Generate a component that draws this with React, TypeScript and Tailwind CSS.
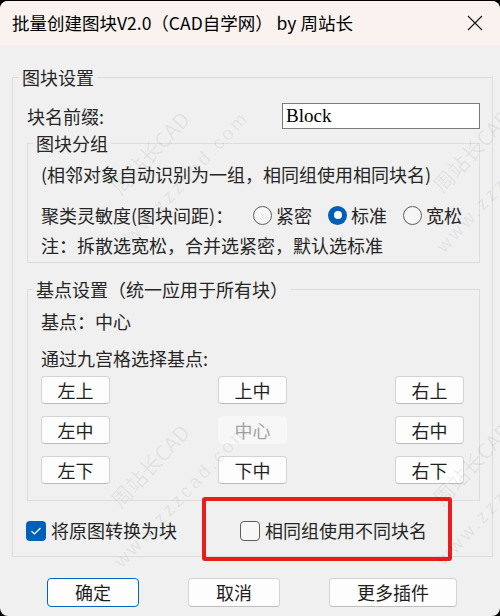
import React, { useState } from "react";

const gridButtons = [
  ["左上", "上中", "右上"],
  ["左中", "中心", "右中"],
  ["左下", "下中", "右下"],
];

const Radio: React.FC<{ checked: boolean; label: string; onClick: () => void }> = ({ checked, label, onClick }) => (
  <button onClick={onClick} className="flex items-center gap-[4px]">
    {checked ? (
      <span className="w-[19px] h-[19px] rounded-full bg-[#005fb8] flex items-center justify-center">
        <span className="w-[8px] h-[8px] rounded-full bg-white" />
      </span>
    ) : (
      <span className="w-[19px] h-[19px] rounded-full border border-[#5c5c5c] bg-[#f6f6f6]" />
    )}
    <span>{label}</span>
  </button>
);

const Checkbox: React.FC<{ checked: boolean; label: string; onClick: () => void }> = ({ checked, label, onClick }) => (
  <button onClick={onClick} className="flex items-center gap-[5px]">
    {checked ? (
      <span className="w-[20px] h-[20px] rounded-[4px] bg-[#005fb8] flex items-center justify-center">
        <svg width="12" height="10" viewBox="0 0 12 10">
          <path d="M1.5 5.2 L4.5 8 L10.5 2" fill="none" stroke="white" strokeWidth="1.2" />
        </svg>
      </span>
    ) : (
      <span className="w-[20px] h-[20px] rounded-[4px] border border-[#5e5e5e] bg-[#f7f7f7]" />
    )}
    <span>{label}</span>
  </button>
);

// faint diagonal watermark laid over the dialog
const Watermark: React.FC = () => (
  <div className="absolute inset-0 pointer-events-none text-black/[0.07]">
    <span className="absolute left-[150px] top-[152px] -translate-x-1/2 -translate-y-1/2 -rotate-[47deg] whitespace-nowrap text-[21px]">周站长CAD</span>
    <span className="absolute left-[182px] top-[182px] -translate-x-1/2 -translate-y-1/2 -rotate-[47deg] whitespace-nowrap text-[19px] tracking-[3px] font-['Liberation_Sans',sans-serif]">www.zzzcad.com</span>
    <span className="absolute left-[472px] top-[150px] -translate-x-1/2 -translate-y-1/2 -rotate-[47deg] whitespace-nowrap text-[21px]">周站长CAD</span>
    <span className="absolute left-[504px] top-[180px] -translate-x-1/2 -translate-y-1/2 -rotate-[47deg] whitespace-nowrap text-[19px] tracking-[3px] font-['Liberation_Sans',sans-serif]">www.zzzcad.com</span>
    <span className="absolute left-[150px] top-[465px] -translate-x-1/2 -translate-y-1/2 -rotate-[47deg] whitespace-nowrap text-[21px]">周站长CAD</span>
    <span className="absolute left-[182px] top-[495px] -translate-x-1/2 -translate-y-1/2 -rotate-[47deg] whitespace-nowrap text-[19px] tracking-[3px] font-['Liberation_Sans',sans-serif]">www.zzzcad.com</span>
    <span className="absolute left-[472px] top-[463px] -translate-x-1/2 -translate-y-1/2 -rotate-[47deg] whitespace-nowrap text-[21px]">周站长CAD</span>
    <span className="absolute left-[504px] top-[493px] -translate-x-1/2 -translate-y-1/2 -rotate-[47deg] whitespace-nowrap text-[19px] tracking-[3px] font-['Liberation_Sans',sans-serif]">www.zzzcad.com</span>
  </div>
);

const App: React.FC = () => {
  const [sensitivity, setSensitivity] = useState("标准");
  const [convert, setConvert] = useState(true);
  const [uniqueNames, setUniqueNames] = useState(false);

  return (
    <div className="w-[500px] h-[616px] bg-black pt-px">
      <div className="relative h-[615px] rounded-[8px] overflow-hidden bg-[#f0f0f0] text-[#262626] font-['Noto_Sans_CJK_SC',sans-serif]">
        <header className="h-[44px] bg-[#f9f2ef] flex items-center justify-between pl-3 pr-[17px] text-black">
          <span className="text-[17.5px]">批量创建图块V2.0（CAD自学网） by 周站长</span>
          <svg width="16" height="16" viewBox="0 0 16 16">
            <path d="M1 1 L15 15 M15 1 L1 15" stroke="#1a1a1a" strokeWidth="1.2" />
          </svg>
        </header>

        <div className="pt-[22px] pl-3 pr-[7px] text-[18px]">
          <fieldset className="border border-[#dcdcdc] pl-[14px] pr-[12px] pb-[15px]">
            <legend className="-ml-2 px-[3px] leading-[20px]">图块设置</legend>

            <div className="mt-4 h-[26px] flex items-center justify-between">
              <span>块名前缀:</span>
              <div className="w-[198px] h-[26px] border border-[#7a7a7a] bg-white px-[3px] flex items-center text-black text-[19px] font-['Liberation_Serif',serif]">
                Block
              </div>
            </div>

            <fieldset className="mt-1 border border-[#dcdcdc] pl-[13px] pr-[15px] pb-[5px]">
              <legend className="-ml-2 px-[3px] leading-[20px]">图块分组</legend>
              <div className="mt-[9px] h-6 leading-6">(相邻对象自动识别为一组，相同组使用相同块名)</div>
              <div className="mt-[17px] h-6 flex items-center">
                <span className="w-[212px]">聚类灵敏度(图块间距)：</span>
                <div className="flex items-center gap-[16px]">
                  {["紧密", "标准", "宽松"].map((s) => (
                    <Radio key={s} label={s} checked={sensitivity === s} onClick={() => setSensitivity(s)} />
                  ))}
                </div>
              </div>
              <div className="mt-[6px] h-6 leading-6">注：拆散选宽松，合并选紧密，默认选标准</div>
            </fieldset>

            <fieldset className="mt-4 border border-[#dcdcdc] pl-[13px] pr-[15px] pb-4">
              <legend className="-ml-2 px-[3px] leading-[20px]">基点设置（统一应用于所有块）</legend>
              <div className="mt-[10px] h-6 leading-6">基点：中心</div>
              <div className="mt-[13px] h-6 leading-6">通过九宫格选择基点:</div>
              <div className="mt-[6px] flex flex-col gap-3">
                {gridButtons.map((row, i) => (
                  <div key={i} className="flex justify-between">
                    {row.map((b) =>
                      b === "中心" ? (
                        <div key={b} className="w-[69px] h-[28px] rounded-[4px] bg-[#f7f7f7] text-[#a3a3a3] flex items-center justify-center">
                          {b}
                        </div>
                      ) : (
                        <button
                          key={b}
                          className="w-[69px] h-[28px] rounded-[4px] bg-[#fdfdfd] border border-[#d3d3d3] border-b-[#bdbdbd] text-[#1f1f1f] flex items-center justify-center"
                        >
                          {b}
                        </button>
                      )
                    )}
                  </div>
                ))}
              </div>
            </fieldset>

            <div className="mt-4 h-6 -ml-px grid grid-cols-[214px_1fr] items-center">
              <Checkbox label="将原图转换为块" checked={convert} onClick={() => setConvert(!convert)} />
              <Checkbox label="相同组使用不同块名" checked={uniqueNames} onClick={() => setUniqueNames(!uniqueNames)} />
            </div>
          </fieldset>
        </div>

        <div className="mt-[21px] pl-[47px] flex gap-[49px] text-[18px] text-[#1f1f1f]">
          <button className="w-[92px] h-[29px] rounded-[4px] bg-[#fdfdfd] border border-[#0067c0]">确定</button>
          <button className="w-[92px] h-[29px] rounded-[4px] bg-[#fdfdfd] border border-[#d3d3d3] border-b-[#bdbdbd]">取消</button>
          <button className="w-[128px] h-[29px] rounded-[4px] bg-[#fdfdfd] border border-[#d3d3d3] border-b-[#bdbdbd]">更多插件</button>
        </div>

        <div className="absolute left-[202px] top-[496px] w-[250px] h-[64px] border-[4.5px] border-[#e81d1d] rounded-[3px] pointer-events-none" />

        <Watermark />
      </div>
    </div>
  );
};

export default App;
